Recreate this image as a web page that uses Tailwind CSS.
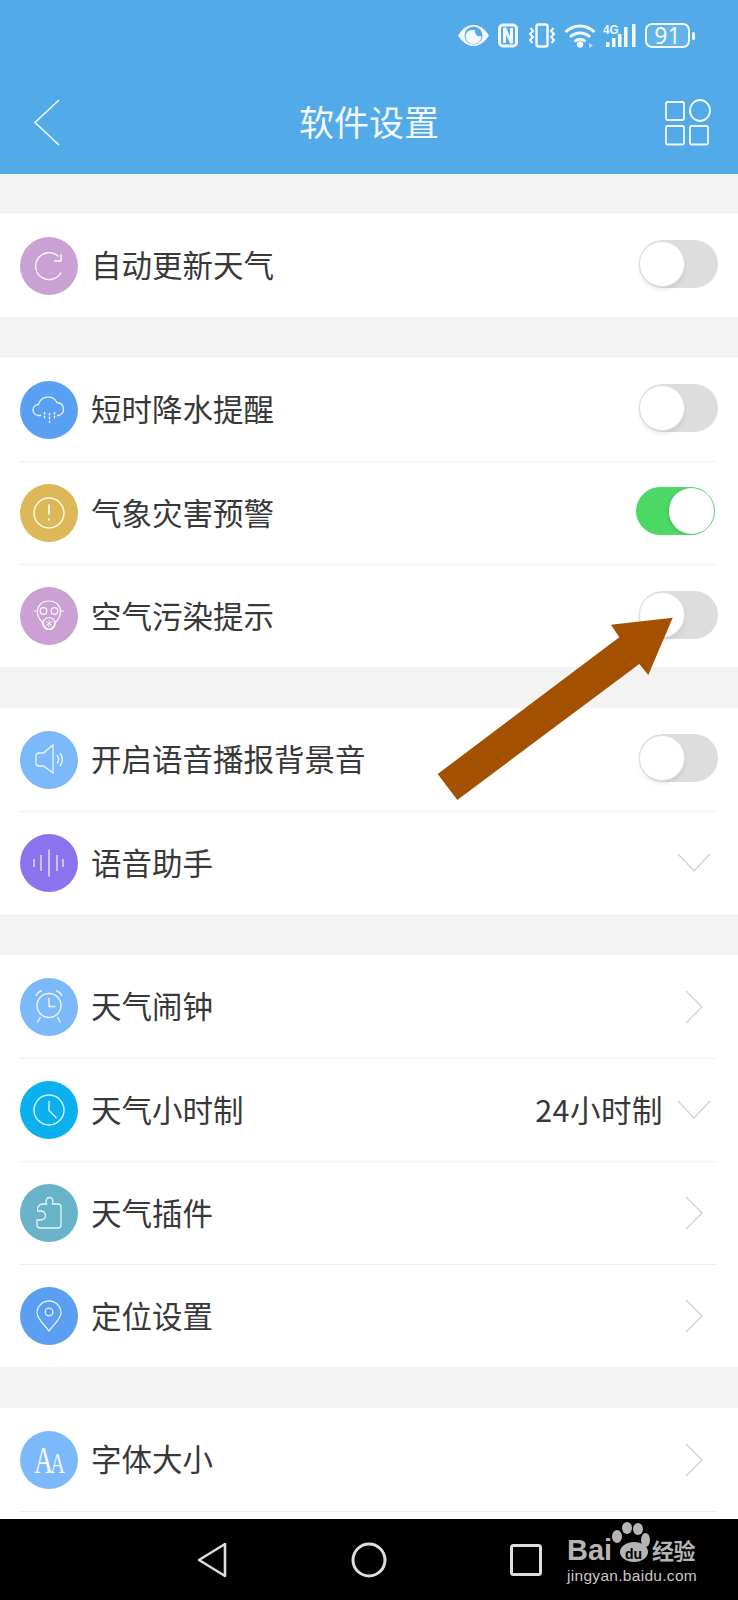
<!DOCTYPE html>
<html lang="zh">
<head>
<meta charset="utf-8">
<script src="https://cdn.jsdelivr.net/npm/@tailwindcss/browser@4"></script>
<title>软件设置</title>
</head>
<body class="m-0">
<div class="relative w-[738px] h-[1600px] overflow-hidden flex flex-col bg-[#f3f3f3] font-['Noto_Sans_CJK_SC','Noto_Sans',sans-serif] text-[30.5px] text-[#383838]">

  <!-- Header -->
  <header class="h-[174px] shrink-0 bg-[#52abe8] text-[#f2f8fd]">
    <div class="h-[71px] pt-[23px] pr-[43px] flex justify-end items-start">
      <svg class="w-[31px] h-[25px]" viewBox="0 0 31 25" fill="none"><path d="M0 12.500C5 4.500 10.500 2 15.500 2S26 4.500 31 12.500C26 20.500 20.500 23 15.500 23S5 20.500 0 12.500Z" fill="#f2f8fd"/><circle cx="15.500" cy="12.500" r="9" fill="#52abe8"/><path d="M7.500 13a8 8 0 0 0 16 0c-3.500 1-6.500-1-6.500-5.500-4.500-1.500-9 1-9.500 5.500Z" fill="#f2f8fd"/></svg>
      <svg class="w-[20px] h-[25px] ml-[9px]" viewBox="0 0 20 25" fill="none" stroke="#f2f8fd"><rect x="1.500" y="2" width="17" height="21" rx="3.500" stroke-width="3"/><path d="M6.500 20V5l7 15V5" stroke-width="3"/></svg>
      <svg class="w-[28px] h-[25px] ml-[10px]" viewBox="0 0 28 25" fill="none" stroke="#f2f8fd" stroke-width="2.500"><rect x="8.500" y="1.500" width="11" height="22" rx="2"/><path d="M2.500 5l2.500 3-3 3 3 3-3 3 2.500 3M25.500 5l-2.500 3 3 3-3 3 3 3-2.500 3" stroke-width="2"/></svg>
      <svg class="w-[32px] h-[25px] ml-[8px]" viewBox="0 0 32 25" fill="none" stroke="#f2f8fd" stroke-width="3"><path d="M1.500 9C10 1 22 1 30.500 9M6 14c5.500-5.500 14.500-5.500 20 0M10.500 18.500c3-3 8-3 11 0"/><circle cx="16" cy="21.500" r="3.200" fill="#f2f8fd" stroke="none"/><path d="M25 20l4 2.500-4 2.500Z" fill="#f2f8fd" stroke="none" opacity=".7"/></svg>
      <div class="relative w-[34px] h-[25px] ml-[7px]">
        <span class="absolute left-0 top-0 text-[13px] leading-[13px] font-bold font-['Liberation_Sans',sans-serif] scale-x-90 origin-left">4G</span>
        <svg class="absolute inset-0 w-[34px] h-[25px]" viewBox="0 0 34 25" fill="#f2f8fd"><rect x="3" y="19" width="3.500" height="5"/><rect x="9" y="15" width="3.500" height="9"/><rect x="15" y="11" width="3.500" height="13"/><rect x="21" y="4" width="3.500" height="20"/><rect x="29" y="1" width="3.500" height="23"/></svg>
      </div>
      <div class="ml-[8px] flex items-center">
        <div class="w-[45px] h-[25px] rounded-[7px] border-2 border-[#f2f8fd] flex items-center justify-center bg-[#7ec0ee]/40 text-[23px] leading-none font-['Noto_Sans',sans-serif]">91</div>
        <div class="w-[3px] h-[8px] ml-[2px] rounded-sm bg-[#f2f8fd]"></div>
      </div>
    </div>
    <div class="mt-[28px] h-[47px] px-[26px] grid grid-cols-[1fr_auto_1fr] items-center">
      <svg class="ml-[7px] w-[27px] h-[47px]" viewBox="0 0 27 47" fill="none" stroke="#f2f8fd" stroke-width="1.600"><path d="M26 1 2 23.500 26 46"/></svg>
      <div class="text-[35px] leading-none text-[#f2f8fd] -mt-[5px]">软件设置</div>
      <svg class="justify-self-end mr-[1px] w-[46px] h-[47px]" viewBox="0 0 46 47" fill="none" stroke="#f2f8fd" stroke-width="1.800"><rect x="1" y="3" width="18" height="18" rx="1.500"/><ellipse cx="35" cy="11.500" rx="10" ry="10.500"/><rect x="1" y="27" width="18" height="18.500" rx="1.500"/><rect x="25" y="27" width="18" height="18.500" rx="1.500"/></svg>
    </div>
  </header>

  <main class="flex-1 overflow-hidden pt-[40px] flex flex-col gap-[41px]">

    <!-- Group 1 -->
    <section class="bg-white shrink-0">
      <div class="h-[103px] ml-5 mr-[21px] flex items-center gap-[13px]">
        <svg class="w-[58px] h-[58px] shrink-0" viewBox="0 0 58 58" fill="none"><circle cx="29" cy="29" r="29" fill="#cba0d5"/><path d="M38.500 19.500A13.500 13.500 0 1 0 41 35.500" stroke="#fff" stroke-opacity=".9" stroke-width="1.400"/><path d="M41 17v7h-7" stroke="#fff" stroke-opacity=".9" stroke-width="1.400"/></svg>
        <span class="flex-1 -mt-[1px]">自动更新天气</span>
        <div class="relative w-[79px] h-[48px] mb-[3px] -mr-[1px] rounded-full bg-[#dddddd]"><div class="absolute left-0 top-[1px] w-[46px] h-[46px] rounded-full bg-white border border-[#e0e0e0] shadow-[0_3px_4px_rgba(0,0,0,0.08)]"></div></div>
      </div>
    </section>

    <!-- Group 2 -->
    <section class="bg-white shrink-0">
      <div class="h-[104px] ml-5 mr-[21px] flex items-center gap-[13px] border-b border-[#efefef]">
        <svg class="w-[58px] h-[58px] shrink-0" viewBox="0 0 58 58" fill="none" stroke="#fff" stroke-opacity=".85" stroke-width="1.300"><circle cx="29" cy="29" r="29" fill="#59a0f2" stroke="none"/><path d="M21 34.500h-2.500A5.500 5.500 0 0 1 18.500 23.500 10 10 0 0 1 37 21.500 6.700 6.700 0 0 1 39 34.500H37"/><path d="M24.500 31v7M29.500 32v10M34.500 31v7" stroke-dasharray="2.500 1.200" stroke-width="1.500"/></svg>
        <span class="flex-1 -mt-[1px]">短时降水提醒</span>
        <div class="relative w-[79px] h-[48px] mb-[3px] -mr-[1px] rounded-full bg-[#dddddd]"><div class="absolute left-0 top-[1px] w-[46px] h-[46px] rounded-full bg-white border border-[#e0e0e0] shadow-[0_3px_4px_rgba(0,0,0,0.08)]"></div></div>
      </div>
      <div class="h-[103px] ml-5 mr-[21px] flex items-center gap-[13px] border-b border-[#efefef]">
        <svg class="w-[58px] h-[58px] shrink-0" viewBox="0 0 58 58" fill="none" stroke="#fff" stroke-opacity=".9" stroke-width="1.400"><circle cx="29" cy="29" r="29" fill="#dcb858" stroke="none"/><circle cx="29" cy="29" r="15"/><path d="M29 20.500v10M29 34.500v2" stroke-width="1.800"/></svg>
        <span class="flex-1 -mt-[1px]">气象灾害预警</span>
        <div class="relative w-[79px] h-[48px] mb-[5px] mr-[2px] rounded-full bg-[#4bd865] border border-[#59d270]"><div class="absolute right-0 top-0 w-[45px] h-[46px] rounded-full bg-white shadow-[-1px_1px_3px_rgba(0,0,0,0.12)]"></div></div>
      </div>
      <div class="h-[102px] ml-5 mr-[21px] flex items-center gap-[13px]">
        <svg class="w-[58px] h-[58px] shrink-0" viewBox="0 0 58 58" fill="none" stroke="#fff" stroke-opacity=".9" stroke-width="1.200"><circle cx="29" cy="29" r="29" fill="#cba0d5" stroke="none"/><path d="M29 14c7 0 11.500 4.500 11.500 10.500 0 4.500-1.500 7.500-4.500 10-1 4-4 8-7 8s-6-4-7-8c-3-2.500-4.500-5.500-4.500-10C17.500 18.500 22 14 29 14Z"/><circle cx="23.500" cy="24" r="3.300"/><circle cx="34.500" cy="24" r="3.300"/><circle cx="29" cy="36.500" r="6"/><path d="M17.500 24h-3.500M40.500 24h3.500"/><path d="M26 34.500l6 4M32 34.500l-6 4M29 32.500v8" stroke-width=".9"/></svg>
        <span class="flex-1 -mt-[1px]">空气污染提示</span>
        <div class="relative w-[79px] h-[48px] mb-[3px] -mr-[1px] rounded-full bg-[#dddddd]"><div class="absolute left-0 top-[1px] w-[46px] h-[46px] rounded-full bg-white border border-[#e0e0e0] shadow-[0_3px_4px_rgba(0,0,0,0.08)]"></div></div>
      </div>
    </section>

    <!-- Group 3 -->
    <section class="bg-white shrink-0">
      <div class="h-[104px] ml-5 mr-[21px] flex items-center gap-[13px] border-b border-[#efefef]">
        <svg class="w-[58px] h-[58px] shrink-0" viewBox="0 0 58 58" fill="none" stroke="#fff" stroke-opacity=".85" stroke-width="1.300"><circle cx="29" cy="29" r="29" fill="#7cb9fb" stroke="none"/><path d="M33 14v28L23.500 35H19a3 3 0 0 1-3-3v-7a3 3 0 0 1 3-3h4.500Z"/><path d="M37 24c2 2.500 2 6 0 8.500M40 22c3 3.500 3 9 0 13"/></svg>
        <span class="flex-1 -mt-[1px]">开启语音播报背景音</span>
        <div class="relative w-[79px] h-[48px] mb-[3px] -mr-[1px] rounded-full bg-[#dddddd]"><div class="absolute left-0 top-[1px] w-[46px] h-[46px] rounded-full bg-white border border-[#e0e0e0] shadow-[0_3px_4px_rgba(0,0,0,0.08)]"></div></div>
      </div>
      <div class="h-[102px] ml-5 mr-[21px] flex items-center gap-[13px]">
        <svg class="w-[58px] h-[58px] shrink-0" viewBox="0 0 58 58" fill="none" stroke="#fff" stroke-opacity=".85" stroke-width="1.300"><circle cx="29" cy="29" r="29" fill="#8b73ee" stroke="none"/><path d="M14 25v8M21 21v16M29 15.500v27M37 21v16M43 25v8"/></svg>
        <span class="flex-1 -mt-[1px]">语音助手</span>
        <svg class="w-[34px] h-[20px] mr-[6px]" viewBox="0 0 34 20" fill="none" stroke="#d2d2d2" stroke-width="1.400"><path d="M1 1l16 17L33 1" /></svg>
      </div>
    </section>

    <!-- Group 4 -->
    <section class="bg-white shrink-0">
      <div class="h-[104px] ml-5 mr-[21px] flex items-center gap-[13px] border-b border-[#efefef]">
        <svg class="w-[58px] h-[58px] shrink-0" viewBox="0 0 58 58" fill="none" stroke="#fff" stroke-opacity=".85" stroke-width="1.400"><circle cx="29" cy="29" r="29" fill="#7cb9fb" stroke="none"/><circle cx="29" cy="27.500" r="12"/><path d="M29 20v8.500h6.500M20.500 39l-3 5.500M37.500 39l3 5.500M16 18c1-2.500 3-4.500 6-5.500M42 18c-1-2.500-3-4.500-6-5.500"/></svg>
        <span class="flex-1 -mt-[1px]">天气闹钟</span>
        <svg class="w-[19px] h-[34px] mr-[13px]" viewBox="0 0 19 34" fill="none" stroke="#d2d2d2" stroke-width="1.400"><path d="M1 1l16 16L1 33"/></svg>
      </div>
      <div class="h-[103px] ml-5 mr-[21px] flex items-center gap-[13px] border-b border-[#efefef]">
        <svg class="w-[58px] h-[58px] shrink-0" viewBox="0 0 58 58" fill="none" stroke="#fff" stroke-opacity=".85" stroke-width="1.400"><circle cx="29" cy="29" r="29" fill="#0bb0ef" stroke="none"/><circle cx="29" cy="29" r="15"/><path d="M29 20v9.500l7.500 7.500"/></svg>
        <span class="flex-1 -mt-[1px]">天气小时制</span>
        <span class="mr-[1px] -mt-[1px] tracking-[0.5px]">24小时制</span>
        <svg class="w-[34px] h-[20px] mr-[6px]" viewBox="0 0 34 20" fill="none" stroke="#d2d2d2" stroke-width="1.400"><path d="M1 1l16 17L33 1"/></svg>
      </div>
      <div class="h-[103px] ml-5 mr-[21px] flex items-center gap-[13px] border-b border-[#efefef]">
        <svg class="w-[58px] h-[58px] shrink-0" viewBox="0 0 58 58" fill="none" stroke="#fff" stroke-opacity=".85" stroke-width="1.300"><circle cx="29" cy="29" r="29" fill="#68b3c9" stroke="none"/><path d="M22 20h4.500c-1.500-4 .5-6.500 3-6.500s4.500 2.500 3 6.500H38a3 3 0 0 1 3 3v18a3 3 0 0 1-3 3H20a3 3 0 0 1-3-3v-5h3.500c3 0 5-2 5-4.500S23.500 27 20.500 27H17.500c-.5-3 1.500-7 4.500-7Z"/></svg>
        <span class="flex-1 -mt-[1px]">天气插件</span>
        <svg class="w-[19px] h-[34px] mr-[13px]" viewBox="0 0 19 34" fill="none" stroke="#d2d2d2" stroke-width="1.400"><path d="M1 1l16 16L1 33"/></svg>
      </div>
      <div class="h-[102px] ml-5 mr-[21px] flex items-center gap-[13px]">
        <svg class="w-[58px] h-[58px] shrink-0" viewBox="0 0 58 58" fill="none" stroke="#fff" stroke-opacity=".85" stroke-width="1.300"><circle cx="29" cy="29" r="29" fill="#5a9ff2" stroke="none"/><path d="M29 44c-4-6-12-12-12-18a12 12 0 0 1 24 0c0 6-8 12-12 18Z"/><circle cx="29" cy="25" r="3.800"/></svg>
        <span class="flex-1 -mt-[1px]">定位设置</span>
        <svg class="w-[19px] h-[34px] mr-[13px]" viewBox="0 0 19 34" fill="none" stroke="#d2d2d2" stroke-width="1.400"><path d="M1 1l16 16L1 33"/></svg>
      </div>
    </section>

    <!-- Group 5 -->
    <section class="bg-white flex-1">
      <div class="h-[104px] ml-5 mr-[21px] flex items-center gap-[13px] border-b border-[#efefef]">
        <div class="w-[58px] h-[58px] shrink-0 rounded-full bg-[#7cb9fb] flex items-baseline justify-center pt-[10px] text-white/90 font-['Liberation_Serif',serif] leading-none">
          <span class="text-[38px] leading-[38px] scale-x-[.7] -mr-[10px]">A</span><span class="text-[29px] leading-[29px] scale-x-[.7]">A</span>
        </div>
        <span class="flex-1 -mt-[1px]">字体大小</span>
        <svg class="w-[19px] h-[34px] mr-[13px]" viewBox="0 0 19 34" fill="none" stroke="#d2d2d2" stroke-width="1.400"><path d="M1 1l16 16L1 33"/></svg>
      </div>
    </section>
  </main>

  <!-- Navigation bar -->
  <nav class="h-[81px] shrink-0 bg-black flex items-center pl-[197px]">
    <svg class="w-[30px] h-[36px]" viewBox="0 0 30 36" fill="none" stroke="#dedede" stroke-width="2.600" stroke-linejoin="round"><path d="M28 2v32L2 18Z"/></svg>
    <svg class="w-[36px] h-[36px] ml-[124px]" viewBox="0 0 36 36" fill="none" stroke="#dedede" stroke-width="3"><circle cx="18" cy="18" r="16"/></svg>
    <svg class="w-[32px] h-[32px] ml-[123px]" viewBox="0 0 32 32" fill="none" stroke="#dedede" stroke-width="3"><rect x="1.500" y="1.500" width="29" height="29" rx="2"/></svg>
  </nav>

  <!-- Annotation arrow -->
  <svg class="absolute left-0 top-0 w-[738px] h-[1600px] pointer-events-none" viewBox="0 0 738 1600"><path d="M437.700 774 619.300 637.300 611 624.700 672.700 617.700 648.300 675 639.300 664 457.300 800Z" fill="#a35100"/></svg>

  <!-- Watermark -->
  <div class="absolute left-[567px] top-[1523px] w-[135px] h-[65px] text-[#b5b5b5]">
    <svg class="absolute left-[40px] -top-[1px] w-[50px] h-[42px]" viewBox="40 -1 50 42" fill="#b5b5b5"><ellipse cx="50" cy="13.500" rx="5" ry="6.500"/><ellipse cx="60" cy="5" rx="5" ry="6"/><ellipse cx="71" cy="6" rx="5" ry="6"/><ellipse cx="78.500" cy="17" rx="4.500" ry="7"/><ellipse cx="67" cy="29" rx="14" ry="10"/></svg>
    <span class="absolute left-0 top-[12px] text-[29px] leading-[30px] font-bold font-['Liberation_Sans',sans-serif]">Bai</span>
    <span class="absolute left-[58px] top-[24px] text-[14px] leading-[14px] font-bold text-black font-['Liberation_Sans',sans-serif]">du</span>
    <span class="absolute left-[85px] top-[13px] text-[22px] leading-[26px] font-bold tracking-[-0.5px]">经验</span>
    <span class="absolute left-0 top-[43px] text-[15.500px] leading-[20px] tracking-[0.3px] text-[#c8c8c8] font-['Liberation_Sans',sans-serif]">jingyan.baidu.com</span>
  </div>
</div>
</body>
</html>
